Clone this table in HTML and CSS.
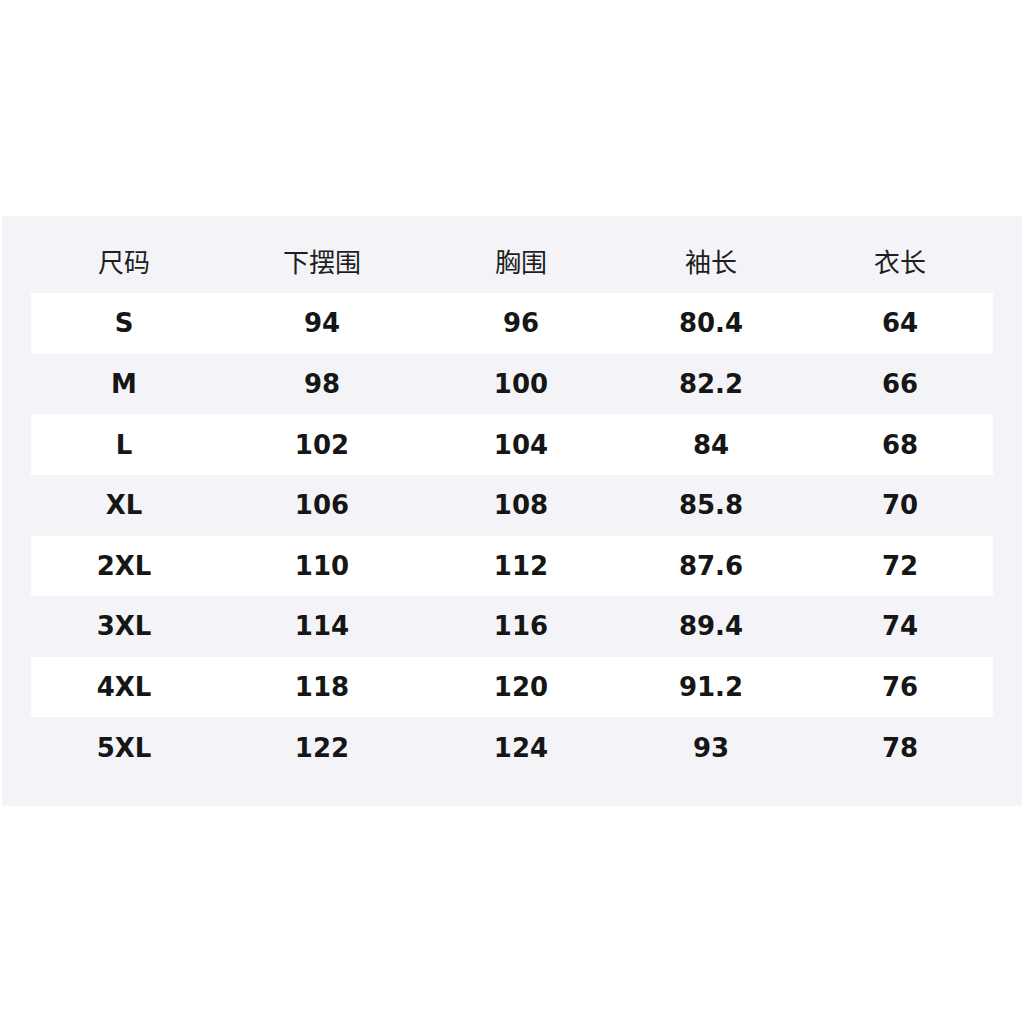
FILE: index.html
```html
<!DOCTYPE html>
<html lang="zh">
<head>
<meta charset="utf-8">
<title>尺码表</title>
<link rel="stylesheet" href="styles.css">
</head>
<body>
<div class="page">
  <div class="panel">
    <div class="row head">
      <div>尺码</div><div>下摆围</div><div>胸围</div><div>袖长</div><div>衣长</div>
    </div>
    <div class="row odd"><div>S</div><div>94</div><div>96</div><div>80.4</div><div>64</div></div>
    <div class="row"><div>M</div><div>98</div><div>100</div><div>82.2</div><div>66</div></div>
    <div class="row odd"><div>L</div><div>102</div><div>104</div><div>84</div><div>68</div></div>
    <div class="row"><div>XL</div><div>106</div><div>108</div><div>85.8</div><div>70</div></div>
    <div class="row odd"><div>2XL</div><div>110</div><div>112</div><div>87.6</div><div>72</div></div>
    <div class="row"><div>3XL</div><div>114</div><div>116</div><div>89.4</div><div>74</div></div>
    <div class="row odd"><div>4XL</div><div>118</div><div>120</div><div>91.2</div><div>76</div></div>
    <div class="row"><div>5XL</div><div>122</div><div>124</div><div>93</div><div>78</div></div>
  </div>
</div>
</body>
</html>
```
FILE: styles.css
```css
html, body {
  margin: 0;
  padding: 0;
  background: #ffffff;
}
.page {
  width: 1024px;
  height: 1024px;
  padding-top: 216px;
  padding-left: 2px;
  box-sizing: border-box;
}
.panel {
  width: 1020px;
  height: 590px;
  box-sizing: border-box;
  background: #f4f4f8;
  padding: 0 29px 28px 29px;
}
.row {
  display: grid;
  grid-template-columns: 186px 210px 188px 192px 186px;
  align-items: center;
  justify-items: center;
  height: 60.625px;
  font-family: "DejaVu Sans", "Noto Sans CJK SC", sans-serif;
  font-weight: bold;
  font-size: 26px;
  color: #161616;
}
.row.odd {
  background: #ffffff;
}
.row.head {
  height: 77px;
  box-sizing: border-box;
  padding-top: 11px;
  font-family: "Noto Sans CJK SC", sans-serif;
  font-weight: normal;
  font-size: 26px;
  color: #1e1e1e;
}
```
